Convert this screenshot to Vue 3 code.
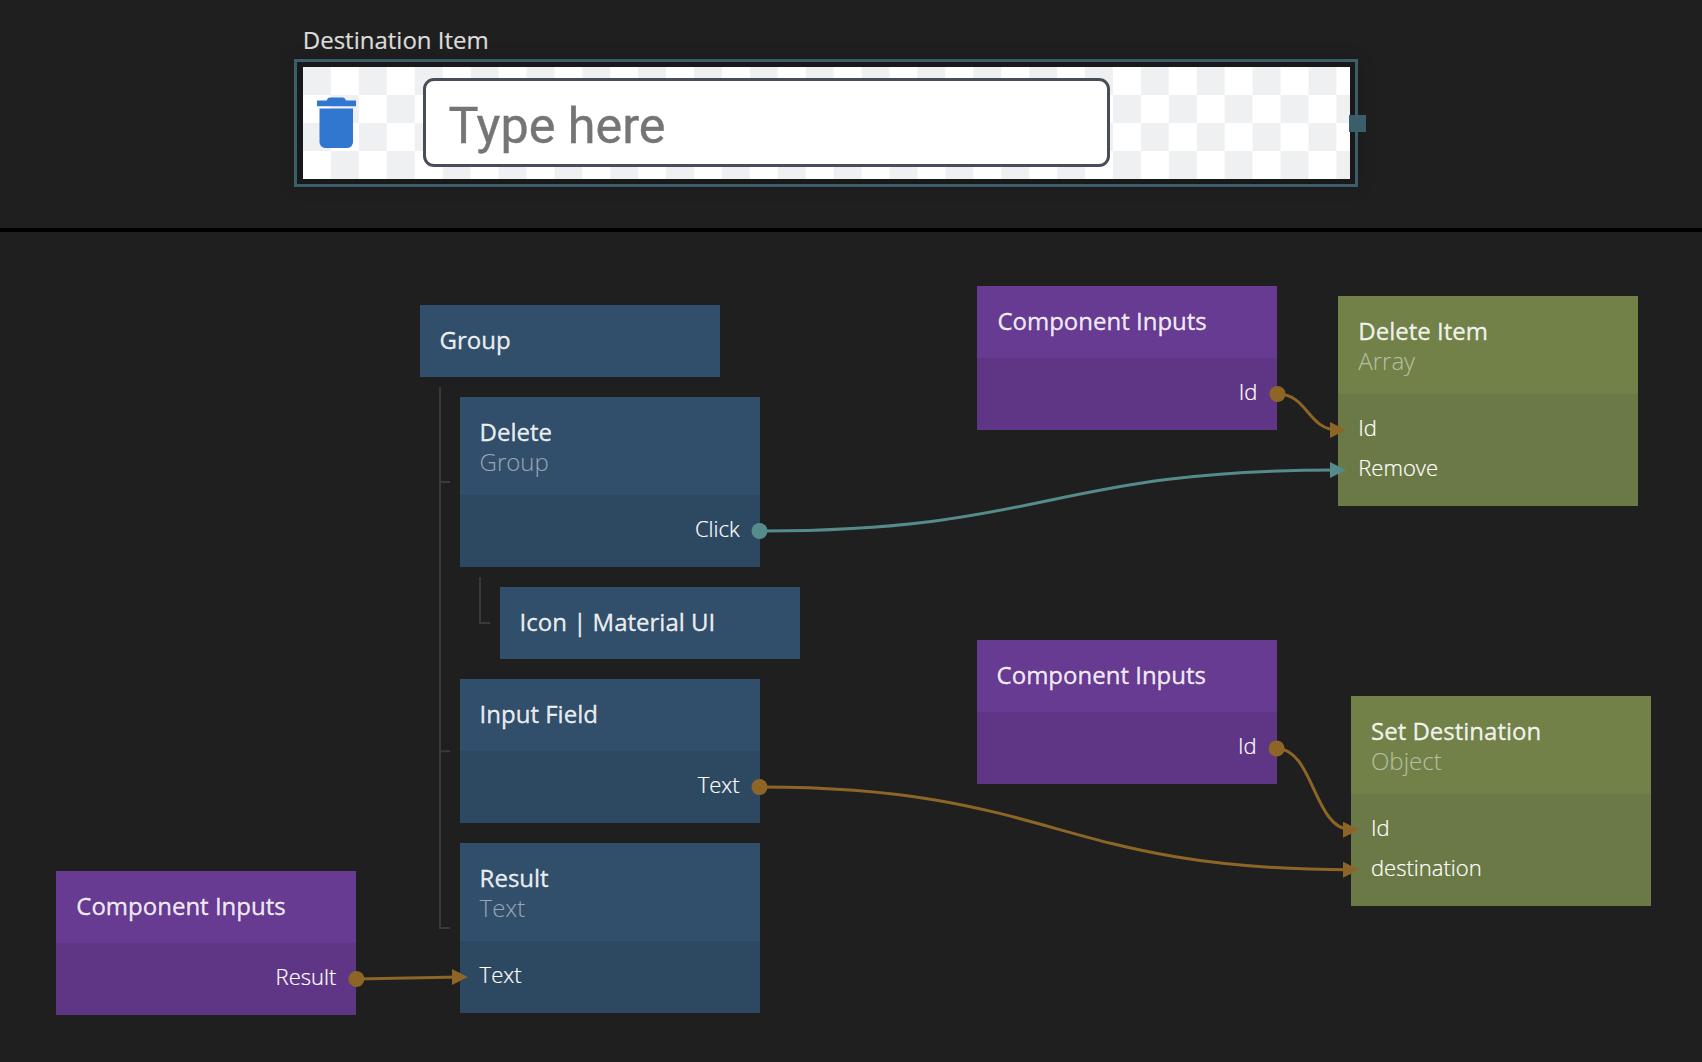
<script setup>
const tree = {
  title: 'Group',
  children: [
    {
      title: 'Delete', subtitle: 'Group', outputs: [{ name: 'Click' }],
      children: [{ title: 'Icon | Material UI' }],
    },
    { title: 'Input Field', outputs: [{ name: 'Text' }] },
    { title: 'Result', subtitle: 'Text', inputs: [{ name: 'Text' }] },
  ],
}

// Tree flattened to rows with a depth, so that nested nodes indent by one step each.
const rows = []
function walk(node, depth) {
  rows.push({ ...node, depth })
  ;(node.children || []).forEach((child) => walk(child, depth + 1))
}
walk(tree, 0)

const freeNodes = [
  { id: 'in-result', x: 56.3, y: 871, tone: 'purple', title: 'Component Inputs', outputs: [{ name: 'Result' }] },
  { id: 'in-delete', x: 977.4, y: 286.2, tone: 'purple', title: 'Component Inputs', outputs: [{ name: 'Id' }] },
  { id: 'in-set', x: 976.6, y: 640.4, tone: 'purple', title: 'Component Inputs', outputs: [{ name: 'Id' }] },
  { id: 'delete', x: 1338.3, y: 296, tone: 'green', title: 'Delete Item', subtitle: 'Array', inputs: [{ name: 'Id' }, { name: 'Remove' }] },
  { id: 'set', x: 1351, y: 695.8, tone: 'green', title: 'Set Destination', subtitle: 'Object', inputs: [{ name: 'Id' }, { name: 'destination' }] },
]

const signal = '#568b8b'
const value = '#8c6527'
const wires = [
  { from: [759.5, 531], to: [1338, 470], color: signal },
  { from: [1277.5, 394], to: [1338, 430], color: value },
  { from: [759.5, 787], to: [1351, 869.7], color: value },
  { from: [1276.6, 748.5], to: [1351, 829.7], color: value },
  { from: [356.4, 979], to: [460, 977], color: value },
]
function curve({ from: [x1, y1], to: [x2, y2] }) {
  if (Math.abs(y2 - y1) < 4) return `M${x1} ${y1}L${x2} ${y2}`
  const mid = (x1 + x2) / 2
  return `M${x1} ${y1}C${mid} ${y1} ${mid} ${y2} ${x2} ${y2}`
}
function arrow({ to: [x, y] }) {
  return `${x - 8},${y - 8} ${x + 8},${y} ${x - 8},${y + 8}`
}
</script>

<template>
  <div class="editor">
    <section class="preview">
      <div class="label">Destination Item</div>
      <div class="frame">
        <div class="stage">
          <svg class="trash" viewBox="0 0 40 52">
            <path d="M0 3.4h9.6Q10.6 .9 12.7 .6h13.2Q28 .9 29 3.4h10V9.2H0z" />
            <path d="M2.5 11.4H36v33.9a5.6 5.6 0 0 1-5.6 5.6H8.1a5.6 5.6 0 0 1-5.6-5.6z" />
          </svg>
          <div class="field"><span>Type here</span></div>
        </div>
        <i class="handle"></i>
      </div>
    </section>

    <section class="canvas">
      <div class="tree">
        <div v-for="row in rows" :key="row.title" class="node blue" :class="'depth-' + row.depth">
          <header>
            <div class="title">{{ row.title }}</div>
            <div v-if="row.subtitle" class="subtitle">{{ row.subtitle }}</div>
          </header>
          <div v-if="row.inputs || row.outputs" class="ports">
            <div v-for="p in row.inputs" :key="p.name" class="port">{{ p.name }}</div>
            <div v-for="p in row.outputs" :key="p.name" class="port out">{{ p.name }}</div>
          </div>
        </div>
      </div>

      <div
        v-for="n in freeNodes" :key="n.id" class="node free" :class="n.tone"
        :style="{ left: n.x + 'px', top: n.y - 232 + 'px' }"
      >
        <header>
          <div class="title">{{ n.title }}</div>
          <div v-if="n.subtitle" class="subtitle">{{ n.subtitle }}</div>
        </header>
        <div class="ports">
          <div v-for="p in n.inputs" :key="p.name" class="port">{{ p.name }}</div>
          <div v-for="p in n.outputs" :key="p.name" class="port out">{{ p.name }}</div>
        </div>
      </div>

      <svg class="wires" viewBox="0 232 1702 830">
        <path class="branch" d="M440 387V928H450M440 482H450M440 751.3H450M480 577V623H490" />
        <g v-for="(w, i) in wires" :key="i">
          <path :d="curve(w)" :stroke="w.color" />
          <polygon :points="arrow(w)" :fill="w.color" />
          <circle :cx="w.from[0]" :cy="w.from[1]" r="8" :fill="w.color" />
        </g>
      </svg>
    </section>
  </div>
</template>

<style>
body { background: #1f1f1f; }
</style>

<style scoped>
.editor {
  display: flex;
  flex-direction: column;
  width: 1702px;
  height: 1062px;
  overflow: hidden;
  background: #1f1f1f;
  font-family: "Open Sans", sans-serif;
}
.preview {
  box-sizing: border-box;
  flex: none;
  height: 232px;
  padding: 24px 0 0 294.4px;
  border-bottom: 4px solid #000;
}
.label {
  height: 34.5px;
  padding-left: 8.4px;
  font-size: 24px;
  line-height: 32px;
  color: #dcdcdc;
  -webkit-text-stroke: 0.2px;
}
.frame {
  position: relative;
  box-sizing: border-box;
  width: 1064px;
  height: 128px;
  padding: 5px 5px 5px 6px;
  border: 3px solid #3a5f6b;
  background: #191919;
  box-shadow: 0 0 16px rgba(0, 0, 0, 0.15);
}
.stage {
  box-sizing: border-box;
  display: flex;
  align-items: flex-start;
  width: 1047px;
  height: 112px;
  padding: 11px 0 0 13.6px;
  background: conic-gradient(#fff 25%, #eff0f2 0 50%, #fff 0 75%, #eff0f2 0) 0 0 / 55.86px 56px;
}
.trash {
  flex: none;
  width: 40px;
  height: 52px;
  margin-top: 19px;
  fill: #3176cf;
}
.field {
  box-sizing: border-box;
  display: flex;
  align-items: center;
  width: 687px;
  height: 89px;
  margin-left: 65.9px;
  padding: 7px 0 0 22.5px;
  border: 3px solid #474e59;
  border-radius: 11px;
  background: #fff;
  font: 50.3px/60px Roboto, sans-serif;
  color: #757575;
  -webkit-text-stroke: 0.4px;
}
.handle {
  position: absolute;
  top: 53.5px;
  right: -11px;
  width: 17px;
  height: 17px;
  background: #3a5f6b;
}
.canvas {
  position: relative;
  flex: 1;
}
.tree {
  display: flex;
  flex-direction: column;
  gap: 20px;
  padding: 73px 0 0 419.6px;
}
.depth-1 { margin-left: 40px; }
.depth-2 { margin-left: 80px; }
.node { width: 300px; }
.free { position: absolute; }
header {
  box-sizing: border-box;
  min-height: 72px;
  padding: 20px 20px 18px;
}
.title {
  font-size: 24px;
  line-height: 30px;
  color: rgba(255, 255, 255, 0.9);
  -webkit-text-stroke: 0.3px;
}
.subtitle {
  font-size: 24px;
  font-weight: 300;
  line-height: 30px;
  color: rgba(255, 255, 255, 0.5);
}
.ports { padding: 16px 20px; }
.port {
  height: 40px;
  font-size: 22px;
  font-weight: 300;
  line-height: 34px;
  color: #fff;
  -webkit-text-stroke: 0.2px;
}
.out { text-align: right; }
.blue { background: #2d4861; }
.blue header { background: #314f6b; }
.purple { background: #5f3685; }
.purple header { background: #673b91; }
.green { background: #6a7945; }
.green header { background: #718148; }
.wires {
  position: absolute;
  inset: 0;
  width: 1702px;
  height: 830px;
  fill: none;
  stroke-width: 3;
}
.wires .branch {
  stroke: #3a3a3a;
  stroke-width: 2;
}
</style>
